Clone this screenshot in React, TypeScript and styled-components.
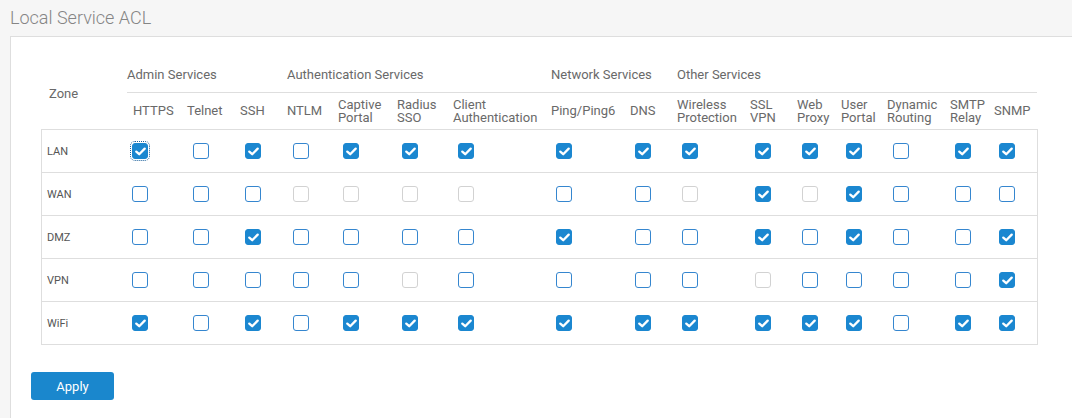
import React from "react";
import styled, { createGlobalStyle } from "styled-components";

const GlobalStyle = createGlobalStyle`
  html, body { margin: 0; padding: 0; background: #f6f6f6; overflow: hidden; }
  body { font-family: Roboto, "Noto Sans", "Liberation Sans", sans-serif; }
`;

type Col = { key: string; label: string[]; width: number; cbOffset: number };
type Group = { label: string; span: number; flush?: boolean };

const COLUMNS: Col[] = [
  { key: "https", label: ["HTTPS"], width: 54, cbOffset: 5 },
  { key: "telnet", label: ["Telnet"], width: 53, cbOffset: 12 },
  { key: "ssh", label: ["SSH"], width: 47, cbOffset: 11 },
  { key: "ntlm", label: ["NTLM"], width: 51, cbOffset: 12 },
  { key: "captive", label: ["Captive", "Portal"], width: 59, cbOffset: 11 },
  { key: "radius", label: ["Radius", "SSO"], width: 56, cbOffset: 11 },
  { key: "client", label: ["Client", "Authentication"], width: 98, cbOffset: 11 },
  { key: "ping", label: ["Ping/Ping6"], width: 79, cbOffset: 11 },
  { key: "dns", label: ["DNS"], width: 47, cbOffset: 11 },
  { key: "wireless", label: ["Wireless", "Protection"], width: 73, cbOffset: 11 },
  { key: "ssl", label: ["SSL", "VPN"], width: 47, cbOffset: 11 },
  { key: "web", label: ["Web", "Proxy"], width: 44, cbOffset: 11 },
  { key: "user", label: ["User", "Portal"], width: 46, cbOffset: 11 },
  { key: "dynamic", label: ["Dynamic", "Routing"], width: 63, cbOffset: 12 },
  { key: "smtp", label: ["SMTP", "Relay"], width: 44, cbOffset: 11 },
  { key: "snmp", label: ["SNMP"], width: 49, cbOffset: 11 },
];

const GROUPS: Group[] = [
  { label: "Admin Services", span: 3, flush: true },
  { label: "Authentication Services", span: 4 },
  { label: "Network Services", span: 2 },
  { label: "Other Services", span: 7 },
];

// one letter per column, grouped as Admin | Auth | Network | Other
// c = checked, o = unchecked, d = disabled
const ROWS: { zone: string; states: string }[] = [
  { zone: "LAN", states: ["coc", "occc", "cc", "ccccocc"].join("") },
  { zone: "WAN", states: ["ooo", "dddd", "oo", "dcdcooo"].join("") },
  { zone: "DMZ", states: ["ooc", "oooo", "co", "ococooc"].join("") },
  { zone: "VPN", states: ["ooo", "oodo", "oo", "odooooc"].join("") },
  { zone: "WiFi", states: ["coc", "occc", "cc", "ccccocc"].join("") },
];

const TEMPLATE = `85px ${COLUMNS.map((c) => `${c.width}px`).join(" ")}`;

const Title = styled.h1`
  margin: 6px 0 6px 10px;
  font-size: 18px;
  line-height: 24px;
  font-weight: 300;
  color: #858585;
`;

const Panel = styled.section`
  margin-left: 10px;
  height: 382px;
  background: #ffffff;
  border: 1px solid #dedede;
  border-right: none;
  border-bottom: none;
  padding: 19px 0 0 20px;
  box-sizing: border-box;
`;

const TableWrap = styled.div`
  margin-left: 10px;
  width: 997px;
`;

const HeaderGrid = styled.div`
  display: grid;
  grid-template-columns: ${TEMPLATE};
  grid-template-rows: 37px 36px;
  padding: 0 1px;
  color: #696969;
  font-size: 13px;
`;

const ZoneHead = styled.div`
  grid-row: 1 / span 2;
  display: flex;
  align-items: center;
  padding-left: 7px;
  padding-top: 1px;
`;

const GroupHead = styled.div<{ $span: number; $flush?: boolean }>`
  grid-column: span ${(p) => p.$span};
  display: flex;
  align-items: center;
  padding-left: ${(p) => (p.$flush ? 0 : 6)}px;
  border-bottom: 1px solid #dedede;
  white-space: nowrap;
`;

const SubHead = styled.div`
  display: flex;
  flex-direction: column;
  justify-content: center;
  padding: 0 0 1px 6px;
  line-height: 13px;
  white-space: nowrap;
`;

const Body = styled.div`
  border: 1px solid #dedede;
`;

const Row = styled.div`
  display: grid;
  grid-template-columns: ${TEMPLATE};
  height: 42px;
  & + & {
    border-top: 1px solid #dedede;
  }
`;

const ZoneCell = styled.div`
  display: flex;
  align-items: center;
  padding-left: 5px;
  font-size: 11px;
  color: #555;
`;

const BoxCell = styled.div<{ $offset: number }>`
  display: flex;
  align-items: center;
  padding-left: ${(p) => p.$offset}px;
`;

const Box = styled.span<{ $state: string; $focused?: boolean }>`
  width: 16px;
  height: 16px;
  box-sizing: border-box;
  border-radius: 3px;
  display: inline-flex;
  align-items: center;
  justify-content: center;
  background: ${(p) => (p.$state === "c" ? "#1b87d0" : "#ffffff")};
  border: 1.5px solid
    ${(p) => (p.$state === "c" ? "#1b87d0" : p.$state === "d" ? "#d2d2d2" : "#3586cf")};
  outline: ${(p) => (p.$focused ? "1px dotted #1b5f9a" : "none")};
  outline-offset: 1px;
`;

const Apply = styled.button`
  display: block;
  margin-top: 27px;
  width: 83px;
  height: 28px;
  border: none;
  border-radius: 3px;
  background: #1a87cd;
  color: #ffffff;
  font-family: Roboto, "Noto Sans", sans-serif;
  font-size: 13px;
  font-weight: 400;
  cursor: pointer;
`;

const Check = () => (
  <svg width="11" height="9" viewBox="0 0 11 9">
    <path
      d="M1.3 4.6 L4.2 7.2 L9.7 1.6"
      fill="none"
      stroke="#fff"
      strokeWidth="2.3"
      strokeLinecap="round"
      strokeLinejoin="round"
    />
  </svg>
);

export default function App() {
  return (
    <>
      <GlobalStyle />
      <Title>Local Service ACL</Title>
      <Panel>
        <TableWrap>
          <HeaderGrid>
            <ZoneHead>Zone</ZoneHead>
            {GROUPS.map((g) => (
              <GroupHead key={g.label} $span={g.span} $flush={g.flush}>
                {g.label}
              </GroupHead>
            ))}
            {COLUMNS.map((c) => (
              <SubHead key={c.key}>
                {c.label.map((l) => (
                  <span key={l}>{l}</span>
                ))}
              </SubHead>
            ))}
          </HeaderGrid>
          <Body>
            {ROWS.map((r, ri) => (
              <Row key={r.zone}>
                <ZoneCell>{r.zone}</ZoneCell>
                {COLUMNS.map((c, ci) => {
                  const s = r.states[ci];
                  return (
                    <BoxCell key={c.key} $offset={c.cbOffset}>
                      <Box $state={s} $focused={ri === 0 && ci === 0}>
                        {s === "c" && <Check />}
                      </Box>
                    </BoxCell>
                  );
                })}
              </Row>
            ))}
          </Body>
        </TableWrap>
        <Apply>Apply</Apply>
      </Panel>
    </>
  );
}
